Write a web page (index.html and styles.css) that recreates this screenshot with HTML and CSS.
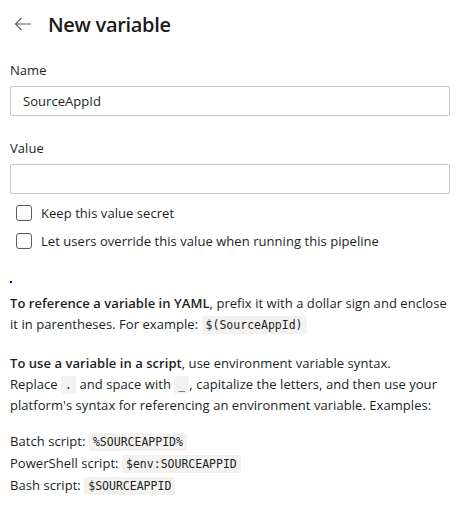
FILE: index.html
```html
<!DOCTYPE html>
<html>
<head>
<meta charset="utf-8">
<link rel="stylesheet" href="styles.css">
</head>
<body>
<div class="panel">
  <div class="header">
    <svg class="back" width="18" height="14" viewBox="0 0 18 14"><path d="M17 7H1.5M7.5 1L1.5 7l6 6" fill="none" stroke="#605e5c" stroke-width="1.1"/></svg>
    <h1 class="title">New variable</h1>
  </div>
  <div class="field">
    <label class="label">Name</label>
    <div class="input">SourceAppId</div>
  </div>
  <div class="field">
    <label class="label">Value</label>
    <div class="input"></div>
  </div>
  <div class="checks">
    <div class="check"><span class="box"></span><span>Keep this value secret</span></div>
    <div class="check"><span class="box"></span><span>Let users override this value when running this pipeline</span></div>
  </div>
  <div class="dot"></div>
  <div class="help">
    <p class="para"><strong>To reference a variable in YAML</strong>, prefix it with a dollar sign and enclose it in parentheses. For example: <code class="code">$(SourceAppId)</code></p>
    <p class="para"><strong>To use a variable in a script</strong>, use environment variable syntax.<br>Replace <code class="code">.</code> and space with <code class="code">_</code>, capitalize the letters, and then use your platform's syntax for referencing an environment variable. Examples:</p>
    <div class="examples">
      <div>Batch script: <code class="code">%SOURCEAPPID%</code></div>
      <div>PowerShell script: <code class="code">$env:SOURCEAPPID</code></div>
      <div>Bash script: <code class="code">$SOURCEAPPID</code></div>
    </div>
  </div>
</div>
</body>
</html>
```
FILE: styles.css
```css
* { box-sizing: border-box; }
html, body { margin: 0; padding: 0; background: #fff; }
body {
  font-family: "Open Sans", "Noto Sans", sans-serif;
  font-size: 13px;
  letter-spacing: 0.05px;
  color: #201f1e;
}
.panel { padding: 0 12px 0 10px; }
.header {
  display: flex;
  align-items: center;
  height: 48px;
  margin-bottom: 2px;
}
.back { margin-left: 4px; margin-right: 16px; }
.title {
  margin: 0;
  font-size: 20px;
  font-weight: 600;
  letter-spacing: -0.3px;
  color: #1b1a19;
}
.field { display: flex; flex-direction: column; }
.field + .field { margin-top: 12px; }
.label { padding: 10px 0 6px; line-height: 20px; }
.input {
  height: 30px;
  border: 1px solid #c8c6c4;
  border-radius: 2px;
  padding: 0 12px;
  line-height: 28px;
}
.checks { display: flex; flex-direction: column; gap: 8px; margin-top: 9px; padding-left: 6px; }
.check { display: flex; align-items: center; gap: 9px; line-height: 20px; }
.box {
  width: 16px; height: 16px;
  border: 1px solid #605e5c;
  border-radius: 3px;
}
.dot { width: 2px; height: 2px; background: #0000ff; margin: 30px 0 0 0; }
.help { margin-top: 10px; }
.para { margin: 0 0 18px; line-height: 21px; }
.para strong { font-weight: 600; }
.code {
  display: inline-block;
  font-family: "DejaVu Sans Mono", monospace;
  font-size: 11.5px;
  line-height: 18px;
  letter-spacing: 0;
  background: #f3f2f1;
  padding: 0 4px;
  border-radius: 2px;
  vertical-align: baseline;
}
.examples { display: flex; flex-direction: column; gap: 2px; line-height: 20px; margin-top: -3px; }
```
